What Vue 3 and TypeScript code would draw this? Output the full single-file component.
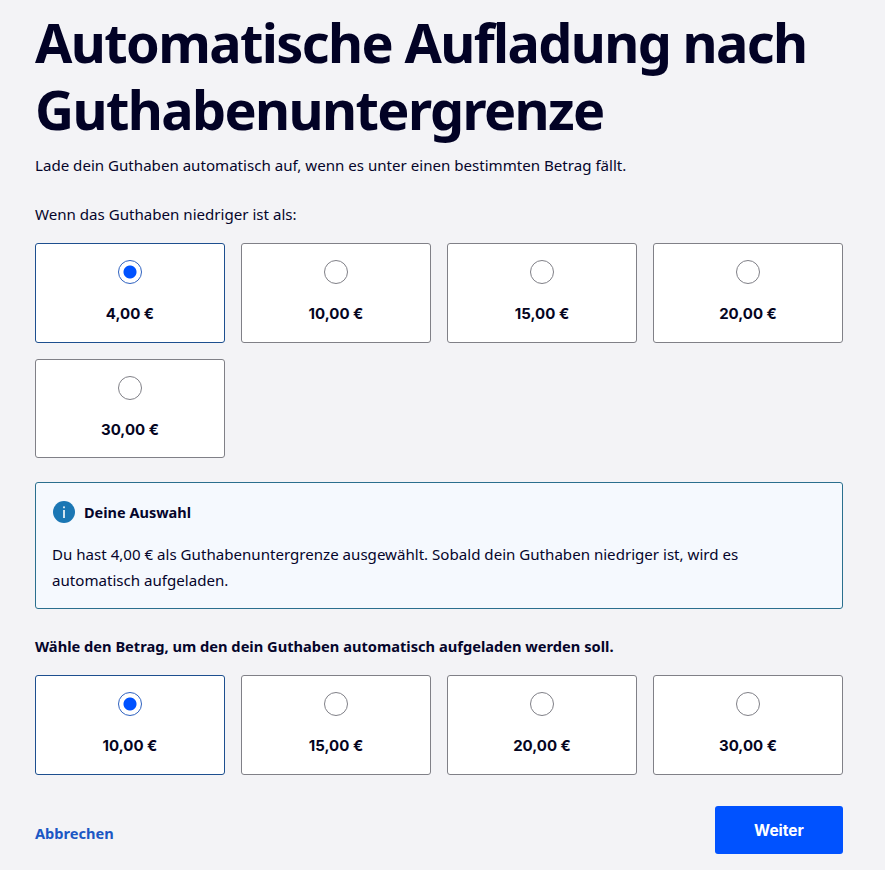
<script setup lang="ts">
import { ref, computed } from 'vue'

const limits = ['4,00 €', '10,00 €', '15,00 €', '20,00 €', '30,00 €']
const amounts = ['10,00 €', '15,00 €', '20,00 €', '30,00 €']
const limit = ref('4,00 €')
const amount = ref('10,00 €')
const summary = computed(
  () => `Du hast ${limit.value} als Guthabenuntergrenze ausgewählt. Sobald dein Guthaben niedriger ist, wird es automatisch aufgeladen.`
)
</script>

<template>
  <div class="page">
    <h1>Automatische Aufladung nach Guthabenuntergrenze</h1>
    <p class="intro">Lade dein Guthaben automatisch auf, wenn es unter einen bestimmten Betrag fällt.</p>
    <p class="question">Wenn das Guthaben niedriger ist als:</p>
    <div class="options">
      <label v-for="item in limits" :key="item" class="option" :class="{ active: item === limit }">
        <input v-model="limit" type="radio" name="limit" :value="item" />
        <span class="dot"></span>
        <span class="price">{{ item }}</span>
      </label>
    </div>
    <section class="notice">
      <div class="notice-head">
        <svg width="24" height="24" viewBox="0 0 24 24" aria-hidden="true">
          <circle cx="12" cy="12" r="11" fill="#1b77b4" />
          <rect x="11.2" y="10" width="1.6" height="8" fill="#fff" />
          <rect x="11.2" y="6.4" width="1.6" height="1.8" fill="#fff" />
        </svg>
        <strong>Deine Auswahl</strong>
      </div>
      <p>{{ summary }}</p>
    </section>
    <p class="question-bold">Wähle den Betrag, um den dein Guthaben automatisch aufgeladen werden soll.</p>
    <div class="options">
      <label v-for="item in amounts" :key="item" class="option" :class="{ active: item === amount }">
        <input v-model="amount" type="radio" name="amount" :value="item" />
        <span class="dot"></span>
        <span class="price">{{ item }}</span>
      </label>
    </div>
    <footer>
      <a href="#" @click.prevent>Abbrechen</a>
      <button type="button">Weiter</button>
    </footer>
  </div>
</template>

<style>
html, body {
  background: #f3f3f6;
}
</style>

<style scoped>
* {
  margin: 0;
  box-sizing: border-box;
}
.page {
  width: 885px;
  height: 870px;
  padding: 9px 42px 0 35px;
  overflow: hidden;
  font-family: "Noto Sans", "Open Sans", sans-serif;
  font-size: 15.1px;
  color: #05052b;
}
h1 {
  font-size: 54px;
  line-height: 67px;
  font-weight: 700;
  letter-spacing: -1.62px;
  color: #020225;
}
.intro {
  margin-top: 10px;
  line-height: 24px;
}
.question {
  margin-top: 25px;
  line-height: 24px;
}
.options {
  display: grid;
  grid-template-columns: repeat(4, 190px);
  gap: 16px;
  margin-top: 17px;
}
.option {
  height: 99.5px;
  padding-top: 16px;
  display: flex;
  flex-direction: column;
  align-items: center;
  background: #fff;
  border: 1px solid #808087;
  border-radius: 3px;
  cursor: pointer;
}
.option.active {
  border-color: #1d4f8f;
}
.option input {
  display: none;
}
.dot {
  width: 24px;
  height: 24px;
  border: 1px solid #808087;
  border-radius: 50%;
  background: #fff;
}
.active .dot {
  border-color: #2f62c0;
  background: radial-gradient(circle, #0052ff 0 6px, #fff 7px);
}
.price {
  margin-top: 18px;
  font-family: Inter, sans-serif;
  font-size: 15px;
  font-weight: 700;
  line-height: 24px;
  color: #05051f;
}
.notice {
  height: 127px;
  margin-top: 24px;
  padding: 16px;
  background: #f5f9fe;
  border: 1px solid #2a6f8e;
  border-radius: 3px;
}
.notice-head {
  display: flex;
  align-items: center;
  gap: 8px;
  height: 26px;
  line-height: 24px;
}
.notice-head strong {
  font-weight: 700;
  font-size: 14.5px;
}
.notice p {
  margin-top: 16px;
  line-height: 26px;
}
.question-bold {
  margin-top: 25.5px;
  line-height: 23px;
  font-weight: 700;
  font-size: 14.65px;
}
.question-bold + .options {
  margin-top: 17.5px;
}
footer {
  display: flex;
  align-items: center;
  justify-content: space-between;
  margin-top: 31.5px;
}
footer a {
  margin-top: 6px;
  color: #1b57c4;
  font-weight: 700;
  font-size: 14.6px;
  text-decoration: none;
}
footer button {
  width: 128px;
  height: 48px;
  background: #0052ff;
  color: #fff;
  border: 0;
  border-radius: 3px;
  font-family: Inter, sans-serif;
  font-size: 15.5px;
  font-weight: 700;
}
</style>
